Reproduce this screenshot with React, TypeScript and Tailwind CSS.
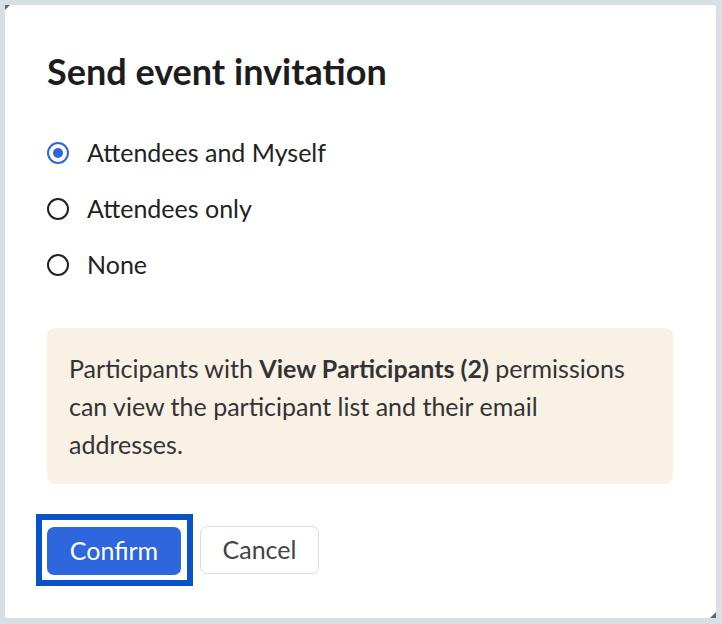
import { useState } from 'react'

const options = ['Attendees and Myself', 'Attendees only', 'None']

export default function App() {
  const [choice, setChoice] = useState(0)

  return (
    <div className="w-[722px] h-[624px] bg-[#d9e0e4] p-[5px] pr-[6px] pb-[6px]" style={{ fontFamily: 'Lato, "Noto Sans", sans-serif' }}>
      <div className="relative w-full h-full bg-white rounded-[3px] px-[42px] pt-[46px]">
        <span className="absolute left-0 top-0 w-0 h-0 border-t-[5px] border-r-[5px] border-t-[#666] border-r-transparent" />
        <span className="absolute right-0 bottom-0 w-0 h-0 border-b-[6px] border-l-[6px] border-b-[#666] border-l-transparent" />

        <h1 className="text-[36px] leading-[40px] font-bold text-[#1d1d1f]">Send event invitation</h1>

        <div className="mt-[34px] flex flex-col">
          {options.map((label, i) => (
            <label key={label} className="h-[56px] flex items-center gap-[18px] cursor-pointer" onClick={() => setChoice(i)}>
              <span className={`w-[22px] h-[22px] rounded-full flex items-center justify-center border-2 ${choice === i ? 'border-[#2e66de]' : 'border-[#222]'}`}>
                {choice === i && <span className="w-[10px] h-[10px] rounded-full bg-[#2e66de]" />}
              </span>
              <span className="text-[25px] text-[#222]">{label}</span>
            </label>
          ))}
        </div>

        <div className="mt-[35px] w-[626px] h-[156px] bg-[#faf1e6] rounded-[8px] px-[22px] pt-[21px] text-[25px] leading-[38px] text-[#333]">
          Participants with <b className="font-bold">View Participants (2)</b> permissions can view the participant list and their email addresses.
        </div>

        <div className="mt-[30px] flex items-center gap-[7px]">
          <div className="border-[6px] border-[#0a52c8] pl-[5px] pr-[6px] pt-[7px] pb-[5px] -ml-[11px]">
            <button className="w-[134px] h-[48px] rounded-[7px] bg-[#2e66de] text-white text-[25px]">Confirm</button>
          </div>
          <button className="w-[119px] h-[48px] rounded-[7px] border border-[#ddd] bg-white text-[#444] text-[25px]">Cancel</button>
        </div>
      </div>
    </div>
  )
}
